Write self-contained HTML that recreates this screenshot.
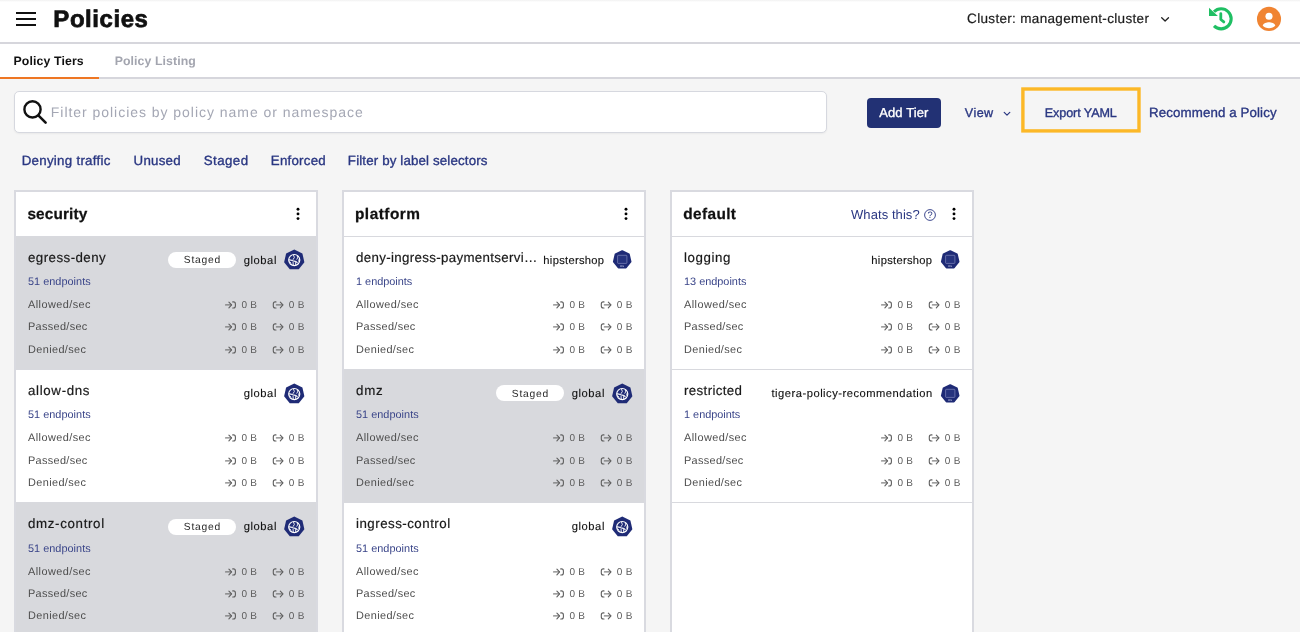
<!DOCTYPE html>
<html lang="en"><head><meta charset="utf-8"><title>Policies</title><style>
*{box-sizing:border-box;margin:0;padding:0}
html,body{width:1300px;height:632px;overflow:hidden}
body{background:#f5f5f5;font-family:"Liberation Sans",sans-serif;position:relative;text-rendering:geometricPrecision}
.t{position:absolute;white-space:nowrap;line-height:20px;height:20px;will-change:transform}
.topbar{position:absolute;left:0;top:0;width:1300px;height:44px;background:#fff;border-bottom:2px solid #d6d6dc;background:linear-gradient(#f1f1f1,#fff 2px) #fff}
.burger{position:absolute;left:16px;top:12px;width:20px;height:14px;border-top:2px solid #111;border-bottom:2px solid #111}
.burger:after{content:"";position:absolute;left:0;top:4px;width:20px;height:2px;background:#111}
.tabs{position:absolute;left:0;top:44px;width:1300px;height:35px;background:#fff;border-bottom:2px solid #d6d6dc}
.tabs .on{position:absolute;left:0;top:33px;width:99px;height:2px;background:#ee7623}
.search{position:absolute;left:14px;top:91px;width:813px;height:42px;background:#fff;border:1px solid #d6d8df;border-radius:5px;box-shadow:0 1px 2px rgba(0,0,0,.05)}
.btn{position:absolute;left:867px;top:98px;width:74px;height:30px;background:#223174;border-radius:4px}
.hl{position:absolute;left:1020px;top:86px;width:124px;height:50px;overflow:visible}
.tier{position:absolute;top:190px;width:304px;height:460px;background:#fff;border:2px solid #d9dae0}
.th{position:relative;height:45px;border-bottom:1px solid #d8d9de}
.card{position:relative;height:133px;border-bottom:1px solid #d8d9de;background:#fff}
.card.staged{background:#d8d9dd}
.pill{position:absolute;width:68px;height:16px;border-radius:8px;background:#fff}
.ico,.ar,.kebab,.q,.abs{position:absolute;overflow:visible;will-change:transform}
</style></head>
<body>
<header class="topbar"><div class="burger"></div><span class="t" id="title" style="left:53px;top:10px;font-size:24px;color:#111;letter-spacing:0.544px;padding-left:0.35px;font-weight:700;-webkit-text-stroke:0.7px #111;">Policies</span><span class="t" id="cluster" style="left:967px;top:9px;font-size:13.5px;color:#1c1c1c;letter-spacing:0.326px;padding-left:0.08px;-webkit-text-stroke:0.2px #1c1c1c;">Cluster: management-cluster</span>
<svg class="abs" style="left:1160px;top:15.5px" width="10" height="7" viewBox="0 0 10 7"><path d="M1.7 1.7L5.1 5.0L8.5 1.7" fill="none" stroke="#222" stroke-width="1.3" stroke-linecap="round" stroke-linejoin="round"/></svg>
<svg class="abs" style="left:1207px;top:5px" width="28" height="28" viewBox="0 0 28 28"><path d="M7 6.75A10.05 10.05 0 1 1 7 20.95" fill="none" stroke="#1fbf63" stroke-width="3.1"/><path d="M2 2.8L2 11L10.9 11Z" fill="#1fbf63"/><path d="M13.8 8.6V14.5L16.8 16.9" fill="none" stroke="#1fbf63" stroke-width="2.8" stroke-linecap="round" stroke-linejoin="round"/></svg>
<svg class="abs" style="left:1255px;top:5px" width="28" height="28" viewBox="0 0 28 28"><circle cx="14" cy="13.9" r="12.05" fill="#f08432"/><circle cx="14" cy="11.3" r="3.55" fill="#fff"/><path fill="#fff" d="M7.7 20.4C8.3 18.3 11.6 17.2 14 17.2S19.7 18.3 20.3 20.4C18.9 22.2 16.6 23.2 14 23.2S9.100 22.2 7.7 20.4Z"/></svg>
</header>
<nav class="tabs"><span class="t" id="tab1" style="left:13px;top:7px;font-size:12.3px;color:#111;letter-spacing:0.121px;padding-left:0.55px;font-weight:700;">Policy Tiers</span><span class="t" id="tab2" style="left:114px;top:7px;font-size:12.3px;color:#a3a5af;letter-spacing:0.089px;padding-left:0.72px;font-weight:700;">Policy Listing</span><div class="on"></div></nav>
<div class="search"><svg class="abs" style="left:6px;top:6px" width="28" height="28" viewBox="0 0 28 28"><circle cx="11.5" cy="11.4" r="8.1" fill="none" stroke="#111" stroke-width="2.4"/><path d="M17.6 17.6L24.6 24.6" stroke="#111" stroke-width="2.6" stroke-linecap="round"/></svg><span class="t" id="ph" style="left:35px;top:10px;font-size:14px;color:#a4a7b4;letter-spacing:0.962px;padding-left:0.82px;">Filter policies by policy name or namespace</span></div>
<div class="btn"></div><span class="t" id="addtier" style="left:879px;top:103px;font-size:13px;color:#fff;letter-spacing:0.129px;padding-left:0.13px;-webkit-text-stroke:0.35px #fff;">Add Tier</span><span class="t" id="view" style="left:964px;top:103px;font-size:12.6px;color:#2a3782;letter-spacing:0.434px;padding-left:0.83px;-webkit-text-stroke:0.35px #2a3782;">View</span>
<svg class="abs" style="left:1003px;top:110.5px" width="8" height="6" viewBox="0 0 8 6"><path d="M1.2 1.3L4 4.1L6.8 1.3" fill="none" stroke="#2a3782" stroke-width="1.2" stroke-linecap="round" stroke-linejoin="round"/></svg>
<svg class="hl" viewBox="0 0 124 50"><rect x="2.9" y="3" width="116.1" height="41.9" fill="none" stroke="#fcb827" stroke-width="3.4"/></svg><span class="t" id="export" style="left:1044px;top:103px;font-size:12.6px;color:#2a3782;letter-spacing:-0.092px;padding-left:0.75px;-webkit-text-stroke:0.35px #2a3782;">Export YAML</span><span class="t" id="recommend" style="left:1149px;top:103px;font-size:13.3px;color:#2a3782;letter-spacing:0.111px;padding-left:0.09px;-webkit-text-stroke:0.35px #2a3782;">Recommend a Policy</span>
<div class="filters"><span class="t" id="f1" style="left:21px;top:151px;font-size:13.3px;color:#2a3782;letter-spacing:0.285px;padding-left:0.68px;-webkit-text-stroke:0.35px #2a3782;">Denying traffic</span><span class="t" id="f2" style="left:133px;top:151px;font-size:13.3px;color:#2a3782;letter-spacing:0.240px;padding-left:0.62px;-webkit-text-stroke:0.35px #2a3782;">Unused</span><span class="t" id="f3" style="left:203px;top:151px;font-size:13.3px;color:#2a3782;letter-spacing:0.470px;padding-left:0.64px;-webkit-text-stroke:0.35px #2a3782;">Staged</span><span class="t" id="f4" style="left:270px;top:151px;font-size:13.3px;color:#2a3782;letter-spacing:0.227px;padding-left:0.86px;-webkit-text-stroke:0.35px #2a3782;">Enforced</span><span class="t" id="f5" style="left:347px;top:151px;font-size:13.3px;color:#2a3782;letter-spacing:0.150px;padding-left:0.86px;-webkit-text-stroke:0.35px #2a3782;">Filter by label selectors</span></div>
<main>
<section class="tier" style="left:14px">
<header class="th">
<span class="t" id="h0" style="left:11px;top:13px;font-size:15.4px;color:#111;letter-spacing:0.108px;padding-left:0.45px;font-weight:700;-webkit-text-stroke:0.25px #111;">security</span>
<svg class="kebab" style="left:279.9px;top:15px" viewBox="0 0 4 14" width="4" height="14"><circle cx="2" cy="2.2" r="1.45"/><circle cx="2" cy="6.9" r="1.45"/><circle cx="2" cy="11.6" r="1.45"/></svg>
</header>
<article class="card staged">
<span class="t" id="c00n" style="left:12px;top:11px;font-size:13.3px;color:#1a1a1a;letter-spacing:0.455px;-webkit-text-stroke:0.2px #1a1a1a;">egress-deny</span>
<span class="t" id="c00e" style="left:12px;top:35px;font-size:10.9px;color:#3a4589;letter-spacing:0.024px;">51 endpoints</span>
<span class="t" id="c00s" style="left:227px;top:14px;font-size:11.2px;color:#111;letter-spacing:0.582px;padding-left:0.65px;-webkit-text-stroke:0.12px #111;">global</span>
<span class="pill" style="left:152.2px;top:15.0px"></span>
<span class="t" id="c00p" style="left:167px;top:14px;font-size:10.3px;color:#2a2a2a;letter-spacing:0.741px;padding-left:0.82px;">Staged</span>
<svg class="ico" style="left:267.6px;top:12px" viewBox="0 0 21 21" width="21" height="21"><polygon fill="#1f2b76" points="10.25,0.60 18.38,4.52 20.39,13.31 14.76,20.37 5.74,20.37 0.11,13.31 2.12,4.52"/><g transform="translate(10.25,11.05)" fill="none" stroke="#fff" stroke-linecap="round" stroke-linejoin="round"><circle r="5.55" stroke-width="1.15"/><path stroke-width="1.2" stroke-opacity=".92" d="M-5 -0.2C-3 -0.4 -1.8 0.9 0 1.1S2.2 1.6 2.9 2.6"/><path stroke-width="1" stroke-opacity=".88" d="M-0.7 -4.8L0.1 -2.6L-1.1 -0.6M3 -4.2L3.4 -2.2L2.6 -0.8M4.9 -0.9L4.4 1.2M-1.2 2.2L-1 4.6M1.3 2.6L1.5 4.7M-4.6 1.6L-3.4 3"/></g></svg>
<span class="t" id="c00r0" style="left:12px;top:58px;font-size:10.9px;color:#4d4d4d;letter-spacing:0.444px;">Allowed/sec</span>
<svg class="ar" style="left:208.7px;top:63.0px" viewBox="0 0 12 9" width="12" height="9" fill="none" stroke="#5f5f5f" stroke-width="1.1" stroke-linecap="round" stroke-linejoin="round"><path d="M0.6 4.9H6.2" stroke-opacity=".8" stroke-width="1.3"/><path d="M3.9 2.1L6.6 4.9L3.9 7.8"/><path d="M7.7 1.9H8.4Q10.4 1.9 10.4 3.9V6Q10.4 8 8.4 8H7.7"/></svg>
<span class="t" id="c00r0a" style="left:225px;top:59px;font-size:10px;color:#5c5c5c;letter-spacing:0.228px;padding-left:0.58px;">0 B</span>
<svg class="ar" style="left:256.2px;top:63.0px" viewBox="0 0 12 9" width="12" height="9" fill="none" stroke="#5f5f5f" stroke-width="1.1" stroke-linecap="round" stroke-linejoin="round"><path d="M4.4 4.9H10.4" stroke-opacity=".8" stroke-width="1.3"/><path d="M8.3 2.1L11 4.9L8.3 7.8"/><path d="M4 1.9H3.3Q1.3 1.9 1.3 3.9V6Q1.3 8 3.3 8H4"/></svg>
<span class="t" id="c00r0b" style="left:272px;top:59px;font-size:10px;color:#5c5c5c;letter-spacing:0.330px;padding-left:0.85px;">0 B</span>
<span class="t" id="c00r1" style="left:12px;top:80px;font-size:10.9px;color:#4d4d4d;letter-spacing:0.334px;">Passed/sec</span>
<svg class="ar" style="left:208.7px;top:85.0px" viewBox="0 0 12 9" width="12" height="9" fill="none" stroke="#5f5f5f" stroke-width="1.1" stroke-linecap="round" stroke-linejoin="round"><path d="M0.6 4.9H6.2" stroke-opacity=".8" stroke-width="1.3"/><path d="M3.9 2.1L6.6 4.9L3.9 7.8"/><path d="M7.7 1.9H8.4Q10.4 1.9 10.4 3.9V6Q10.4 8 8.4 8H7.7"/></svg>
<span class="t" id="c00r1a" style="left:225px;top:81px;font-size:10px;color:#5c5c5c;letter-spacing:0.228px;padding-left:0.58px;">0 B</span>
<svg class="ar" style="left:256.2px;top:85.0px" viewBox="0 0 12 9" width="12" height="9" fill="none" stroke="#5f5f5f" stroke-width="1.1" stroke-linecap="round" stroke-linejoin="round"><path d="M4.4 4.9H10.4" stroke-opacity=".8" stroke-width="1.3"/><path d="M8.3 2.1L11 4.9L8.3 7.8"/><path d="M4 1.9H3.3Q1.3 1.9 1.3 3.9V6Q1.3 8 3.3 8H4"/></svg>
<span class="t" id="c00r1b" style="left:272px;top:81px;font-size:10px;color:#5c5c5c;letter-spacing:0.330px;padding-left:0.85px;">0 B</span>
<span class="t" id="c00r2" style="left:12px;top:103px;font-size:10.9px;color:#4d4d4d;letter-spacing:0.389px;">Denied/sec</span>
<svg class="ar" style="left:208.7px;top:108.0px" viewBox="0 0 12 9" width="12" height="9" fill="none" stroke="#5f5f5f" stroke-width="1.1" stroke-linecap="round" stroke-linejoin="round"><path d="M0.6 4.9H6.2" stroke-opacity=".8" stroke-width="1.3"/><path d="M3.9 2.1L6.6 4.9L3.9 7.8"/><path d="M7.7 1.9H8.4Q10.4 1.9 10.4 3.9V6Q10.4 8 8.4 8H7.7"/></svg>
<span class="t" id="c00r2a" style="left:225px;top:104px;font-size:10px;color:#5c5c5c;letter-spacing:0.228px;padding-left:0.58px;">0 B</span>
<svg class="ar" style="left:256.2px;top:108.0px" viewBox="0 0 12 9" width="12" height="9" fill="none" stroke="#5f5f5f" stroke-width="1.1" stroke-linecap="round" stroke-linejoin="round"><path d="M4.4 4.9H10.4" stroke-opacity=".8" stroke-width="1.3"/><path d="M8.3 2.1L11 4.9L8.3 7.8"/><path d="M4 1.9H3.3Q1.3 1.9 1.3 3.9V6Q1.3 8 3.3 8H4"/></svg>
<span class="t" id="c00r2b" style="left:272px;top:104px;font-size:10px;color:#5c5c5c;letter-spacing:0.330px;padding-left:0.85px;">0 B</span>
</article>
<article class="card">
<span class="t" id="c01n" style="left:12px;top:11px;font-size:13.3px;color:#1a1a1a;letter-spacing:0.666px;-webkit-text-stroke:0.2px #1a1a1a;">allow-dns</span>
<span class="t" id="c01e" style="left:12px;top:35px;font-size:10.9px;color:#3a4589;letter-spacing:0.024px;">51 endpoints</span>
<span class="t" id="c01s" style="left:227px;top:14px;font-size:11.2px;color:#111;letter-spacing:0.582px;padding-left:0.65px;-webkit-text-stroke:0.12px #111;">global</span>
<svg class="ico" style="left:267.6px;top:13px" viewBox="0 0 21 21" width="21" height="21"><polygon fill="#1f2b76" points="10.25,0.60 18.38,4.52 20.39,13.31 14.76,20.37 5.74,20.37 0.11,13.31 2.12,4.52"/><g transform="translate(10.25,11.05)" fill="none" stroke="#fff" stroke-linecap="round" stroke-linejoin="round"><circle r="5.55" stroke-width="1.15"/><path stroke-width="1.2" stroke-opacity=".92" d="M-5 -0.2C-3 -0.4 -1.8 0.9 0 1.1S2.2 1.6 2.9 2.6"/><path stroke-width="1" stroke-opacity=".88" d="M-0.7 -4.8L0.1 -2.6L-1.1 -0.6M3 -4.2L3.4 -2.2L2.6 -0.8M4.9 -0.9L4.4 1.2M-1.2 2.2L-1 4.6M1.3 2.6L1.5 4.7M-4.6 1.6L-3.4 3"/></g></svg>
<span class="t" id="c01r0" style="left:12px;top:58px;font-size:10.9px;color:#4d4d4d;letter-spacing:0.444px;">Allowed/sec</span>
<svg class="ar" style="left:208.7px;top:63.0px" viewBox="0 0 12 9" width="12" height="9" fill="none" stroke="#5f5f5f" stroke-width="1.1" stroke-linecap="round" stroke-linejoin="round"><path d="M0.6 4.9H6.2" stroke-opacity=".8" stroke-width="1.3"/><path d="M3.9 2.1L6.6 4.9L3.9 7.8"/><path d="M7.7 1.9H8.4Q10.4 1.9 10.4 3.9V6Q10.4 8 8.4 8H7.7"/></svg>
<span class="t" id="c01r0a" style="left:225px;top:59px;font-size:10px;color:#5c5c5c;letter-spacing:0.228px;padding-left:0.58px;">0 B</span>
<svg class="ar" style="left:256.2px;top:63.0px" viewBox="0 0 12 9" width="12" height="9" fill="none" stroke="#5f5f5f" stroke-width="1.1" stroke-linecap="round" stroke-linejoin="round"><path d="M4.4 4.9H10.4" stroke-opacity=".8" stroke-width="1.3"/><path d="M8.3 2.1L11 4.9L8.3 7.8"/><path d="M4 1.9H3.3Q1.3 1.9 1.3 3.9V6Q1.3 8 3.3 8H4"/></svg>
<span class="t" id="c01r0b" style="left:272px;top:59px;font-size:10px;color:#5c5c5c;letter-spacing:0.330px;padding-left:0.85px;">0 B</span>
<span class="t" id="c01r1" style="left:12px;top:81px;font-size:10.9px;color:#4d4d4d;letter-spacing:0.334px;">Passed/sec</span>
<svg class="ar" style="left:208.7px;top:86.0px" viewBox="0 0 12 9" width="12" height="9" fill="none" stroke="#5f5f5f" stroke-width="1.1" stroke-linecap="round" stroke-linejoin="round"><path d="M0.6 4.9H6.2" stroke-opacity=".8" stroke-width="1.3"/><path d="M3.9 2.1L6.6 4.9L3.9 7.8"/><path d="M7.7 1.9H8.4Q10.4 1.9 10.4 3.9V6Q10.4 8 8.4 8H7.7"/></svg>
<span class="t" id="c01r1a" style="left:225px;top:82px;font-size:10px;color:#5c5c5c;letter-spacing:0.228px;padding-left:0.58px;">0 B</span>
<svg class="ar" style="left:256.2px;top:86.0px" viewBox="0 0 12 9" width="12" height="9" fill="none" stroke="#5f5f5f" stroke-width="1.1" stroke-linecap="round" stroke-linejoin="round"><path d="M4.4 4.9H10.4" stroke-opacity=".8" stroke-width="1.3"/><path d="M8.3 2.1L11 4.9L8.3 7.8"/><path d="M4 1.9H3.3Q1.3 1.9 1.3 3.9V6Q1.3 8 3.3 8H4"/></svg>
<span class="t" id="c01r1b" style="left:272px;top:82px;font-size:10px;color:#5c5c5c;letter-spacing:0.330px;padding-left:0.85px;">0 B</span>
<span class="t" id="c01r2" style="left:12px;top:103px;font-size:10.9px;color:#4d4d4d;letter-spacing:0.389px;">Denied/sec</span>
<svg class="ar" style="left:208.7px;top:108.0px" viewBox="0 0 12 9" width="12" height="9" fill="none" stroke="#5f5f5f" stroke-width="1.1" stroke-linecap="round" stroke-linejoin="round"><path d="M0.6 4.9H6.2" stroke-opacity=".8" stroke-width="1.3"/><path d="M3.9 2.1L6.6 4.9L3.9 7.8"/><path d="M7.7 1.9H8.4Q10.4 1.9 10.4 3.9V6Q10.4 8 8.4 8H7.7"/></svg>
<span class="t" id="c01r2a" style="left:225px;top:104px;font-size:10px;color:#5c5c5c;letter-spacing:0.228px;padding-left:0.58px;">0 B</span>
<svg class="ar" style="left:256.2px;top:108.0px" viewBox="0 0 12 9" width="12" height="9" fill="none" stroke="#5f5f5f" stroke-width="1.1" stroke-linecap="round" stroke-linejoin="round"><path d="M4.4 4.9H10.4" stroke-opacity=".8" stroke-width="1.3"/><path d="M8.3 2.1L11 4.9L8.3 7.8"/><path d="M4 1.9H3.3Q1.3 1.9 1.3 3.9V6Q1.3 8 3.3 8H4"/></svg>
<span class="t" id="c01r2b" style="left:272px;top:104px;font-size:10px;color:#5c5c5c;letter-spacing:0.330px;padding-left:0.85px;">0 B</span>
</article>
<article class="card staged">
<span class="t" id="c02n" style="left:12px;top:11px;font-size:13.3px;color:#1a1a1a;letter-spacing:0.663px;-webkit-text-stroke:0.2px #1a1a1a;">dmz-control</span>
<span class="t" id="c02e" style="left:12px;top:36px;font-size:10.9px;color:#3a4589;letter-spacing:0.024px;">51 endpoints</span>
<span class="t" id="c02s" style="left:227px;top:14px;font-size:11.2px;color:#111;letter-spacing:0.582px;padding-left:0.65px;-webkit-text-stroke:0.12px #111;">global</span>
<span class="pill" style="left:152.2px;top:15.5px"></span>
<span class="t" id="c02p" style="left:167px;top:15px;font-size:10.3px;color:#2a2a2a;letter-spacing:0.741px;padding-left:0.82px;">Staged</span>
<svg class="ico" style="left:267.6px;top:13px" viewBox="0 0 21 21" width="21" height="21"><polygon fill="#1f2b76" points="10.25,0.60 18.38,4.52 20.39,13.31 14.76,20.37 5.74,20.37 0.11,13.31 2.12,4.52"/><g transform="translate(10.25,11.05)" fill="none" stroke="#fff" stroke-linecap="round" stroke-linejoin="round"><circle r="5.55" stroke-width="1.15"/><path stroke-width="1.2" stroke-opacity=".92" d="M-5 -0.2C-3 -0.4 -1.8 0.9 0 1.1S2.2 1.6 2.9 2.6"/><path stroke-width="1" stroke-opacity=".88" d="M-0.7 -4.8L0.1 -2.6L-1.1 -0.6M3 -4.2L3.4 -2.2L2.6 -0.8M4.9 -0.9L4.4 1.2M-1.2 2.2L-1 4.6M1.3 2.6L1.5 4.7M-4.6 1.6L-3.4 3"/></g></svg>
<span class="t" id="c02r0" style="left:12px;top:59px;font-size:10.9px;color:#4d4d4d;letter-spacing:0.444px;">Allowed/sec</span>
<svg class="ar" style="left:208.7px;top:64.0px" viewBox="0 0 12 9" width="12" height="9" fill="none" stroke="#5f5f5f" stroke-width="1.1" stroke-linecap="round" stroke-linejoin="round"><path d="M0.6 4.9H6.2" stroke-opacity=".8" stroke-width="1.3"/><path d="M3.9 2.1L6.6 4.9L3.9 7.8"/><path d="M7.7 1.9H8.4Q10.4 1.9 10.4 3.9V6Q10.4 8 8.4 8H7.7"/></svg>
<span class="t" id="c02r0a" style="left:225px;top:60px;font-size:10px;color:#5c5c5c;letter-spacing:0.228px;padding-left:0.58px;">0 B</span>
<svg class="ar" style="left:256.2px;top:64.0px" viewBox="0 0 12 9" width="12" height="9" fill="none" stroke="#5f5f5f" stroke-width="1.1" stroke-linecap="round" stroke-linejoin="round"><path d="M4.4 4.9H10.4" stroke-opacity=".8" stroke-width="1.3"/><path d="M8.3 2.1L11 4.9L8.3 7.8"/><path d="M4 1.9H3.3Q1.3 1.9 1.3 3.9V6Q1.3 8 3.3 8H4"/></svg>
<span class="t" id="c02r0b" style="left:272px;top:60px;font-size:10px;color:#5c5c5c;letter-spacing:0.330px;padding-left:0.85px;">0 B</span>
<span class="t" id="c02r1" style="left:12px;top:81px;font-size:10.9px;color:#4d4d4d;letter-spacing:0.334px;">Passed/sec</span>
<svg class="ar" style="left:208.7px;top:86.0px" viewBox="0 0 12 9" width="12" height="9" fill="none" stroke="#5f5f5f" stroke-width="1.1" stroke-linecap="round" stroke-linejoin="round"><path d="M0.6 4.9H6.2" stroke-opacity=".8" stroke-width="1.3"/><path d="M3.9 2.1L6.6 4.9L3.9 7.8"/><path d="M7.7 1.9H8.4Q10.4 1.9 10.4 3.9V6Q10.4 8 8.4 8H7.7"/></svg>
<span class="t" id="c02r1a" style="left:225px;top:82px;font-size:10px;color:#5c5c5c;letter-spacing:0.228px;padding-left:0.58px;">0 B</span>
<svg class="ar" style="left:256.2px;top:86.0px" viewBox="0 0 12 9" width="12" height="9" fill="none" stroke="#5f5f5f" stroke-width="1.1" stroke-linecap="round" stroke-linejoin="round"><path d="M4.4 4.9H10.4" stroke-opacity=".8" stroke-width="1.3"/><path d="M8.3 2.1L11 4.9L8.3 7.8"/><path d="M4 1.9H3.3Q1.3 1.9 1.3 3.9V6Q1.3 8 3.3 8H4"/></svg>
<span class="t" id="c02r1b" style="left:272px;top:82px;font-size:10px;color:#5c5c5c;letter-spacing:0.330px;padding-left:0.85px;">0 B</span>
<span class="t" id="c02r2" style="left:12px;top:103px;font-size:10.9px;color:#4d4d4d;letter-spacing:0.389px;">Denied/sec</span>
<svg class="ar" style="left:208.7px;top:108.0px" viewBox="0 0 12 9" width="12" height="9" fill="none" stroke="#5f5f5f" stroke-width="1.1" stroke-linecap="round" stroke-linejoin="round"><path d="M0.6 4.9H6.2" stroke-opacity=".8" stroke-width="1.3"/><path d="M3.9 2.1L6.6 4.9L3.9 7.8"/><path d="M7.7 1.9H8.4Q10.4 1.9 10.4 3.9V6Q10.4 8 8.4 8H7.7"/></svg>
<span class="t" id="c02r2a" style="left:225px;top:104px;font-size:10px;color:#5c5c5c;letter-spacing:0.228px;padding-left:0.58px;">0 B</span>
<svg class="ar" style="left:256.2px;top:108.0px" viewBox="0 0 12 9" width="12" height="9" fill="none" stroke="#5f5f5f" stroke-width="1.1" stroke-linecap="round" stroke-linejoin="round"><path d="M4.4 4.9H10.4" stroke-opacity=".8" stroke-width="1.3"/><path d="M8.3 2.1L11 4.9L8.3 7.8"/><path d="M4 1.9H3.3Q1.3 1.9 1.3 3.9V6Q1.3 8 3.3 8H4"/></svg>
<span class="t" id="c02r2b" style="left:272px;top:104px;font-size:10px;color:#5c5c5c;letter-spacing:0.330px;padding-left:0.85px;">0 B</span>
</article>
</section>
<section class="tier" style="left:342px">
<header class="th">
<span class="t" id="h1" style="left:10px;top:13px;font-size:15.4px;color:#111;letter-spacing:0.496px;padding-left:0.97px;font-weight:700;-webkit-text-stroke:0.25px #111;">platform</span>
<svg class="kebab" style="left:279.9px;top:15px" viewBox="0 0 4 14" width="4" height="14"><circle cx="2" cy="2.2" r="1.45"/><circle cx="2" cy="6.9" r="1.45"/><circle cx="2" cy="11.6" r="1.45"/></svg>
</header>
<article class="card">
<span class="t" id="c10n" style="left:12px;top:11px;font-size:13.3px;color:#1a1a1a;letter-spacing:0.338px;-webkit-text-stroke:0.2px #1a1a1a;">deny-ingress-paymentservi…</span>
<span class="t" id="c10e" style="left:12px;top:35px;font-size:10.9px;color:#3a4589;letter-spacing:-0.000px;">1 endpoints</span>
<span class="t" id="c10s" style="left:199px;top:14px;font-size:11.2px;color:#111;letter-spacing:0.282px;padding-left:0.36px;-webkit-text-stroke:0.12px #111;">hipstershop</span>
<svg class="ico" style="left:267.6px;top:12px" viewBox="0 0 21 21" width="21" height="21"><polygon fill="#1f2b76" stroke="#1f2b76" stroke-width="1.8" stroke-linejoin="round" points="10.20,2.15 16.92,5.39 18.58,12.66 13.93,18.50 6.47,18.50 1.82,12.66 3.48,5.39"/><rect x="5.6" y="6.3" width="9.3" height="8.1" rx="0.7" fill="#26337e" stroke="#9097c6" stroke-width="0.6"/><text x="10.2" y="17.7" font-size="3.2" font-weight="700" fill="#b9bedd" text-anchor="middle" font-family="Liberation Sans, sans-serif">ns</text></svg>
<span class="t" id="c10r0" style="left:12px;top:58px;font-size:10.9px;color:#4d4d4d;letter-spacing:0.444px;">Allowed/sec</span>
<svg class="ar" style="left:208.7px;top:63.0px" viewBox="0 0 12 9" width="12" height="9" fill="none" stroke="#5f5f5f" stroke-width="1.1" stroke-linecap="round" stroke-linejoin="round"><path d="M0.6 4.9H6.2" stroke-opacity=".8" stroke-width="1.3"/><path d="M3.9 2.1L6.6 4.9L3.9 7.8"/><path d="M7.7 1.9H8.4Q10.4 1.9 10.4 3.9V6Q10.4 8 8.4 8H7.7"/></svg>
<span class="t" id="c10r0a" style="left:225px;top:59px;font-size:10px;color:#5c5c5c;letter-spacing:0.228px;padding-left:0.58px;">0 B</span>
<svg class="ar" style="left:256.2px;top:63.0px" viewBox="0 0 12 9" width="12" height="9" fill="none" stroke="#5f5f5f" stroke-width="1.1" stroke-linecap="round" stroke-linejoin="round"><path d="M4.4 4.9H10.4" stroke-opacity=".8" stroke-width="1.3"/><path d="M8.3 2.1L11 4.9L8.3 7.8"/><path d="M4 1.9H3.3Q1.3 1.9 1.3 3.9V6Q1.3 8 3.3 8H4"/></svg>
<span class="t" id="c10r0b" style="left:272px;top:59px;font-size:10px;color:#5c5c5c;letter-spacing:0.330px;padding-left:0.85px;">0 B</span>
<span class="t" id="c10r1" style="left:12px;top:80px;font-size:10.9px;color:#4d4d4d;letter-spacing:0.334px;">Passed/sec</span>
<svg class="ar" style="left:208.7px;top:85.0px" viewBox="0 0 12 9" width="12" height="9" fill="none" stroke="#5f5f5f" stroke-width="1.1" stroke-linecap="round" stroke-linejoin="round"><path d="M0.6 4.9H6.2" stroke-opacity=".8" stroke-width="1.3"/><path d="M3.9 2.1L6.6 4.9L3.9 7.8"/><path d="M7.7 1.9H8.4Q10.4 1.9 10.4 3.9V6Q10.4 8 8.4 8H7.7"/></svg>
<span class="t" id="c10r1a" style="left:225px;top:81px;font-size:10px;color:#5c5c5c;letter-spacing:0.228px;padding-left:0.58px;">0 B</span>
<svg class="ar" style="left:256.2px;top:85.0px" viewBox="0 0 12 9" width="12" height="9" fill="none" stroke="#5f5f5f" stroke-width="1.1" stroke-linecap="round" stroke-linejoin="round"><path d="M4.4 4.9H10.4" stroke-opacity=".8" stroke-width="1.3"/><path d="M8.3 2.1L11 4.9L8.3 7.8"/><path d="M4 1.9H3.3Q1.3 1.9 1.3 3.9V6Q1.3 8 3.3 8H4"/></svg>
<span class="t" id="c10r1b" style="left:272px;top:81px;font-size:10px;color:#5c5c5c;letter-spacing:0.330px;padding-left:0.85px;">0 B</span>
<span class="t" id="c10r2" style="left:12px;top:103px;font-size:10.9px;color:#4d4d4d;letter-spacing:0.389px;">Denied/sec</span>
<svg class="ar" style="left:208.7px;top:108.0px" viewBox="0 0 12 9" width="12" height="9" fill="none" stroke="#5f5f5f" stroke-width="1.1" stroke-linecap="round" stroke-linejoin="round"><path d="M0.6 4.9H6.2" stroke-opacity=".8" stroke-width="1.3"/><path d="M3.9 2.1L6.6 4.9L3.9 7.8"/><path d="M7.7 1.9H8.4Q10.4 1.9 10.4 3.9V6Q10.4 8 8.4 8H7.7"/></svg>
<span class="t" id="c10r2a" style="left:225px;top:104px;font-size:10px;color:#5c5c5c;letter-spacing:0.228px;padding-left:0.58px;">0 B</span>
<svg class="ar" style="left:256.2px;top:108.0px" viewBox="0 0 12 9" width="12" height="9" fill="none" stroke="#5f5f5f" stroke-width="1.1" stroke-linecap="round" stroke-linejoin="round"><path d="M4.4 4.9H10.4" stroke-opacity=".8" stroke-width="1.3"/><path d="M8.3 2.1L11 4.9L8.3 7.8"/><path d="M4 1.9H3.3Q1.3 1.9 1.3 3.9V6Q1.3 8 3.3 8H4"/></svg>
<span class="t" id="c10r2b" style="left:272px;top:104px;font-size:10px;color:#5c5c5c;letter-spacing:0.330px;padding-left:0.85px;">0 B</span>
</article>
<article class="card staged">
<span class="t" id="c11n" style="left:12px;top:11px;font-size:13.3px;color:#1a1a1a;letter-spacing:0.772px;-webkit-text-stroke:0.2px #1a1a1a;">dmz</span>
<span class="t" id="c11e" style="left:12px;top:35px;font-size:10.9px;color:#3a4589;letter-spacing:0.024px;">51 endpoints</span>
<span class="t" id="c11s" style="left:227px;top:14px;font-size:11.2px;color:#111;letter-spacing:0.582px;padding-left:0.65px;-webkit-text-stroke:0.12px #111;">global</span>
<span class="pill" style="left:152.2px;top:15.2px"></span>
<span class="t" id="c11p" style="left:167px;top:15px;font-size:10.3px;color:#2a2a2a;letter-spacing:0.741px;padding-left:0.82px;">Staged</span>
<svg class="ico" style="left:267.6px;top:13px" viewBox="0 0 21 21" width="21" height="21"><polygon fill="#1f2b76" points="10.25,0.60 18.38,4.52 20.39,13.31 14.76,20.37 5.74,20.37 0.11,13.31 2.12,4.52"/><g transform="translate(10.25,11.05)" fill="none" stroke="#fff" stroke-linecap="round" stroke-linejoin="round"><circle r="5.55" stroke-width="1.15"/><path stroke-width="1.2" stroke-opacity=".92" d="M-5 -0.2C-3 -0.4 -1.8 0.9 0 1.1S2.2 1.6 2.9 2.6"/><path stroke-width="1" stroke-opacity=".88" d="M-0.7 -4.8L0.1 -2.6L-1.1 -0.6M3 -4.2L3.4 -2.2L2.6 -0.8M4.9 -0.9L4.4 1.2M-1.2 2.2L-1 4.6M1.3 2.6L1.5 4.7M-4.6 1.6L-3.4 3"/></g></svg>
<span class="t" id="c11r0" style="left:12px;top:58px;font-size:10.9px;color:#4d4d4d;letter-spacing:0.444px;">Allowed/sec</span>
<svg class="ar" style="left:208.7px;top:63.0px" viewBox="0 0 12 9" width="12" height="9" fill="none" stroke="#5f5f5f" stroke-width="1.1" stroke-linecap="round" stroke-linejoin="round"><path d="M0.6 4.9H6.2" stroke-opacity=".8" stroke-width="1.3"/><path d="M3.9 2.1L6.6 4.9L3.9 7.8"/><path d="M7.7 1.9H8.4Q10.4 1.9 10.4 3.9V6Q10.4 8 8.4 8H7.7"/></svg>
<span class="t" id="c11r0a" style="left:225px;top:59px;font-size:10px;color:#5c5c5c;letter-spacing:0.228px;padding-left:0.58px;">0 B</span>
<svg class="ar" style="left:256.2px;top:63.0px" viewBox="0 0 12 9" width="12" height="9" fill="none" stroke="#5f5f5f" stroke-width="1.1" stroke-linecap="round" stroke-linejoin="round"><path d="M4.4 4.9H10.4" stroke-opacity=".8" stroke-width="1.3"/><path d="M8.3 2.1L11 4.9L8.3 7.8"/><path d="M4 1.9H3.3Q1.3 1.9 1.3 3.9V6Q1.3 8 3.3 8H4"/></svg>
<span class="t" id="c11r0b" style="left:272px;top:59px;font-size:10px;color:#5c5c5c;letter-spacing:0.330px;padding-left:0.85px;">0 B</span>
<span class="t" id="c11r1" style="left:12px;top:81px;font-size:10.9px;color:#4d4d4d;letter-spacing:0.334px;">Passed/sec</span>
<svg class="ar" style="left:208.7px;top:86.0px" viewBox="0 0 12 9" width="12" height="9" fill="none" stroke="#5f5f5f" stroke-width="1.1" stroke-linecap="round" stroke-linejoin="round"><path d="M0.6 4.9H6.2" stroke-opacity=".8" stroke-width="1.3"/><path d="M3.9 2.1L6.6 4.9L3.9 7.8"/><path d="M7.7 1.9H8.4Q10.4 1.9 10.4 3.9V6Q10.4 8 8.4 8H7.7"/></svg>
<span class="t" id="c11r1a" style="left:225px;top:82px;font-size:10px;color:#5c5c5c;letter-spacing:0.228px;padding-left:0.58px;">0 B</span>
<svg class="ar" style="left:256.2px;top:86.0px" viewBox="0 0 12 9" width="12" height="9" fill="none" stroke="#5f5f5f" stroke-width="1.1" stroke-linecap="round" stroke-linejoin="round"><path d="M4.4 4.9H10.4" stroke-opacity=".8" stroke-width="1.3"/><path d="M8.3 2.1L11 4.9L8.3 7.8"/><path d="M4 1.9H3.3Q1.3 1.9 1.3 3.9V6Q1.3 8 3.3 8H4"/></svg>
<span class="t" id="c11r1b" style="left:272px;top:82px;font-size:10px;color:#5c5c5c;letter-spacing:0.330px;padding-left:0.85px;">0 B</span>
<span class="t" id="c11r2" style="left:12px;top:103px;font-size:10.9px;color:#4d4d4d;letter-spacing:0.389px;">Denied/sec</span>
<svg class="ar" style="left:208.7px;top:108.0px" viewBox="0 0 12 9" width="12" height="9" fill="none" stroke="#5f5f5f" stroke-width="1.1" stroke-linecap="round" stroke-linejoin="round"><path d="M0.6 4.9H6.2" stroke-opacity=".8" stroke-width="1.3"/><path d="M3.9 2.1L6.6 4.9L3.9 7.8"/><path d="M7.7 1.9H8.4Q10.4 1.9 10.4 3.9V6Q10.4 8 8.4 8H7.7"/></svg>
<span class="t" id="c11r2a" style="left:225px;top:104px;font-size:10px;color:#5c5c5c;letter-spacing:0.228px;padding-left:0.58px;">0 B</span>
<svg class="ar" style="left:256.2px;top:108.0px" viewBox="0 0 12 9" width="12" height="9" fill="none" stroke="#5f5f5f" stroke-width="1.1" stroke-linecap="round" stroke-linejoin="round"><path d="M4.4 4.9H10.4" stroke-opacity=".8" stroke-width="1.3"/><path d="M8.3 2.1L11 4.9L8.3 7.8"/><path d="M4 1.9H3.3Q1.3 1.9 1.3 3.9V6Q1.3 8 3.3 8H4"/></svg>
<span class="t" id="c11r2b" style="left:272px;top:104px;font-size:10px;color:#5c5c5c;letter-spacing:0.330px;padding-left:0.85px;">0 B</span>
</article>
<article class="card">
<span class="t" id="c12n" style="left:12px;top:11px;font-size:13.3px;color:#1a1a1a;letter-spacing:0.492px;-webkit-text-stroke:0.2px #1a1a1a;">ingress-control</span>
<span class="t" id="c12e" style="left:12px;top:36px;font-size:10.9px;color:#3a4589;letter-spacing:0.024px;">51 endpoints</span>
<span class="t" id="c12s" style="left:227px;top:14px;font-size:11.2px;color:#111;letter-spacing:0.582px;padding-left:0.65px;-webkit-text-stroke:0.12px #111;">global</span>
<svg class="ico" style="left:267.6px;top:13px" viewBox="0 0 21 21" width="21" height="21"><polygon fill="#1f2b76" points="10.25,0.60 18.38,4.52 20.39,13.31 14.76,20.37 5.74,20.37 0.11,13.31 2.12,4.52"/><g transform="translate(10.25,11.05)" fill="none" stroke="#fff" stroke-linecap="round" stroke-linejoin="round"><circle r="5.55" stroke-width="1.15"/><path stroke-width="1.2" stroke-opacity=".92" d="M-5 -0.2C-3 -0.4 -1.8 0.9 0 1.1S2.2 1.6 2.9 2.6"/><path stroke-width="1" stroke-opacity=".88" d="M-0.7 -4.8L0.1 -2.6L-1.1 -0.6M3 -4.2L3.4 -2.2L2.6 -0.8M4.9 -0.9L4.4 1.2M-1.2 2.2L-1 4.6M1.3 2.6L1.5 4.7M-4.6 1.6L-3.4 3"/></g></svg>
<span class="t" id="c12r0" style="left:12px;top:59px;font-size:10.9px;color:#4d4d4d;letter-spacing:0.444px;">Allowed/sec</span>
<svg class="ar" style="left:208.7px;top:64.0px" viewBox="0 0 12 9" width="12" height="9" fill="none" stroke="#5f5f5f" stroke-width="1.1" stroke-linecap="round" stroke-linejoin="round"><path d="M0.6 4.9H6.2" stroke-opacity=".8" stroke-width="1.3"/><path d="M3.9 2.1L6.6 4.9L3.9 7.8"/><path d="M7.7 1.9H8.4Q10.4 1.9 10.4 3.9V6Q10.4 8 8.4 8H7.7"/></svg>
<span class="t" id="c12r0a" style="left:225px;top:60px;font-size:10px;color:#5c5c5c;letter-spacing:0.228px;padding-left:0.58px;">0 B</span>
<svg class="ar" style="left:256.2px;top:64.0px" viewBox="0 0 12 9" width="12" height="9" fill="none" stroke="#5f5f5f" stroke-width="1.1" stroke-linecap="round" stroke-linejoin="round"><path d="M4.4 4.9H10.4" stroke-opacity=".8" stroke-width="1.3"/><path d="M8.3 2.1L11 4.9L8.3 7.8"/><path d="M4 1.9H3.3Q1.3 1.9 1.3 3.9V6Q1.3 8 3.3 8H4"/></svg>
<span class="t" id="c12r0b" style="left:272px;top:60px;font-size:10px;color:#5c5c5c;letter-spacing:0.330px;padding-left:0.85px;">0 B</span>
<span class="t" id="c12r1" style="left:12px;top:81px;font-size:10.9px;color:#4d4d4d;letter-spacing:0.334px;">Passed/sec</span>
<svg class="ar" style="left:208.7px;top:86.0px" viewBox="0 0 12 9" width="12" height="9" fill="none" stroke="#5f5f5f" stroke-width="1.1" stroke-linecap="round" stroke-linejoin="round"><path d="M0.6 4.9H6.2" stroke-opacity=".8" stroke-width="1.3"/><path d="M3.9 2.1L6.6 4.9L3.9 7.8"/><path d="M7.7 1.9H8.4Q10.4 1.9 10.4 3.9V6Q10.4 8 8.4 8H7.7"/></svg>
<span class="t" id="c12r1a" style="left:225px;top:82px;font-size:10px;color:#5c5c5c;letter-spacing:0.228px;padding-left:0.58px;">0 B</span>
<svg class="ar" style="left:256.2px;top:86.0px" viewBox="0 0 12 9" width="12" height="9" fill="none" stroke="#5f5f5f" stroke-width="1.1" stroke-linecap="round" stroke-linejoin="round"><path d="M4.4 4.9H10.4" stroke-opacity=".8" stroke-width="1.3"/><path d="M8.3 2.1L11 4.9L8.3 7.8"/><path d="M4 1.9H3.3Q1.3 1.9 1.3 3.9V6Q1.3 8 3.3 8H4"/></svg>
<span class="t" id="c12r1b" style="left:272px;top:82px;font-size:10px;color:#5c5c5c;letter-spacing:0.330px;padding-left:0.85px;">0 B</span>
<span class="t" id="c12r2" style="left:12px;top:103px;font-size:10.9px;color:#4d4d4d;letter-spacing:0.389px;">Denied/sec</span>
<svg class="ar" style="left:208.7px;top:108.0px" viewBox="0 0 12 9" width="12" height="9" fill="none" stroke="#5f5f5f" stroke-width="1.1" stroke-linecap="round" stroke-linejoin="round"><path d="M0.6 4.9H6.2" stroke-opacity=".8" stroke-width="1.3"/><path d="M3.9 2.1L6.6 4.9L3.9 7.8"/><path d="M7.7 1.9H8.4Q10.4 1.9 10.4 3.9V6Q10.4 8 8.4 8H7.7"/></svg>
<span class="t" id="c12r2a" style="left:225px;top:104px;font-size:10px;color:#5c5c5c;letter-spacing:0.228px;padding-left:0.58px;">0 B</span>
<svg class="ar" style="left:256.2px;top:108.0px" viewBox="0 0 12 9" width="12" height="9" fill="none" stroke="#5f5f5f" stroke-width="1.1" stroke-linecap="round" stroke-linejoin="round"><path d="M4.4 4.9H10.4" stroke-opacity=".8" stroke-width="1.3"/><path d="M8.3 2.1L11 4.9L8.3 7.8"/><path d="M4 1.9H3.3Q1.3 1.9 1.3 3.9V6Q1.3 8 3.3 8H4"/></svg>
<span class="t" id="c12r2b" style="left:272px;top:104px;font-size:10px;color:#5c5c5c;letter-spacing:0.330px;padding-left:0.85px;">0 B</span>
</article>
</section>
<section class="tier" style="left:670px">
<header class="th">
<span class="t" id="h2" style="left:11px;top:13px;font-size:15.4px;color:#111;letter-spacing:0.359px;padding-left:0.31px;font-weight:700;-webkit-text-stroke:0.25px #111;">default</span>
<span class="t" id="w2" style="left:179px;top:13px;font-size:13px;color:#2a3782;letter-spacing:0.072px;padding-left:0.03px;">Whats this?</span>
<svg class="q" style="left:251.89999999999998px;top:16.900000000000006px" viewBox="0 0 12 12" width="12" height="12"><circle cx="6" cy="6" r="5.4" fill="none" stroke="#2a3782" stroke-width="0.9"/><text x="6" y="9.2" font-size="9.2" text-anchor="middle" fill="#2a3782" font-family="Liberation Sans, sans-serif">?</text></svg>
<svg class="kebab" style="left:279.9px;top:15px" viewBox="0 0 4 14" width="4" height="14"><circle cx="2" cy="2.2" r="1.45"/><circle cx="2" cy="6.9" r="1.45"/><circle cx="2" cy="11.6" r="1.45"/></svg>
</header>
<article class="card">
<span class="t" id="c20n" style="left:12px;top:11px;font-size:13.3px;color:#1a1a1a;letter-spacing:0.589px;-webkit-text-stroke:0.2px #1a1a1a;">logging</span>
<span class="t" id="c20e" style="left:12px;top:35px;font-size:10.9px;color:#3a4589;letter-spacing:-0.002px;">13 endpoints</span>
<span class="t" id="c20s" style="left:199px;top:14px;font-size:11.2px;color:#111;letter-spacing:0.282px;padding-left:0.36px;-webkit-text-stroke:0.12px #111;">hipstershop</span>
<svg class="ico" style="left:267.6px;top:12px" viewBox="0 0 21 21" width="21" height="21"><polygon fill="#1f2b76" stroke="#1f2b76" stroke-width="1.8" stroke-linejoin="round" points="10.20,2.15 16.92,5.39 18.58,12.66 13.93,18.50 6.47,18.50 1.82,12.66 3.48,5.39"/><rect x="5.6" y="6.3" width="9.3" height="8.1" rx="0.7" fill="#26337e" stroke="#9097c6" stroke-width="0.6"/><text x="10.2" y="17.7" font-size="3.2" font-weight="700" fill="#b9bedd" text-anchor="middle" font-family="Liberation Sans, sans-serif">ns</text></svg>
<span class="t" id="c20r0" style="left:12px;top:58px;font-size:10.9px;color:#4d4d4d;letter-spacing:0.444px;">Allowed/sec</span>
<svg class="ar" style="left:208.7px;top:63.0px" viewBox="0 0 12 9" width="12" height="9" fill="none" stroke="#5f5f5f" stroke-width="1.1" stroke-linecap="round" stroke-linejoin="round"><path d="M0.6 4.9H6.2" stroke-opacity=".8" stroke-width="1.3"/><path d="M3.9 2.1L6.6 4.9L3.9 7.8"/><path d="M7.7 1.9H8.4Q10.4 1.9 10.4 3.9V6Q10.4 8 8.4 8H7.7"/></svg>
<span class="t" id="c20r0a" style="left:225px;top:59px;font-size:10px;color:#5c5c5c;letter-spacing:0.228px;padding-left:0.58px;">0 B</span>
<svg class="ar" style="left:256.2px;top:63.0px" viewBox="0 0 12 9" width="12" height="9" fill="none" stroke="#5f5f5f" stroke-width="1.1" stroke-linecap="round" stroke-linejoin="round"><path d="M4.4 4.9H10.4" stroke-opacity=".8" stroke-width="1.3"/><path d="M8.3 2.1L11 4.9L8.3 7.8"/><path d="M4 1.9H3.3Q1.3 1.9 1.3 3.9V6Q1.3 8 3.3 8H4"/></svg>
<span class="t" id="c20r0b" style="left:272px;top:59px;font-size:10px;color:#5c5c5c;letter-spacing:0.330px;padding-left:0.85px;">0 B</span>
<span class="t" id="c20r1" style="left:12px;top:80px;font-size:10.9px;color:#4d4d4d;letter-spacing:0.334px;">Passed/sec</span>
<svg class="ar" style="left:208.7px;top:85.0px" viewBox="0 0 12 9" width="12" height="9" fill="none" stroke="#5f5f5f" stroke-width="1.1" stroke-linecap="round" stroke-linejoin="round"><path d="M0.6 4.9H6.2" stroke-opacity=".8" stroke-width="1.3"/><path d="M3.9 2.1L6.6 4.9L3.9 7.8"/><path d="M7.7 1.9H8.4Q10.4 1.9 10.4 3.9V6Q10.4 8 8.4 8H7.7"/></svg>
<span class="t" id="c20r1a" style="left:225px;top:81px;font-size:10px;color:#5c5c5c;letter-spacing:0.228px;padding-left:0.58px;">0 B</span>
<svg class="ar" style="left:256.2px;top:85.0px" viewBox="0 0 12 9" width="12" height="9" fill="none" stroke="#5f5f5f" stroke-width="1.1" stroke-linecap="round" stroke-linejoin="round"><path d="M4.4 4.9H10.4" stroke-opacity=".8" stroke-width="1.3"/><path d="M8.3 2.1L11 4.9L8.3 7.8"/><path d="M4 1.9H3.3Q1.3 1.9 1.3 3.9V6Q1.3 8 3.3 8H4"/></svg>
<span class="t" id="c20r1b" style="left:272px;top:81px;font-size:10px;color:#5c5c5c;letter-spacing:0.330px;padding-left:0.85px;">0 B</span>
<span class="t" id="c20r2" style="left:12px;top:103px;font-size:10.9px;color:#4d4d4d;letter-spacing:0.389px;">Denied/sec</span>
<svg class="ar" style="left:208.7px;top:108.0px" viewBox="0 0 12 9" width="12" height="9" fill="none" stroke="#5f5f5f" stroke-width="1.1" stroke-linecap="round" stroke-linejoin="round"><path d="M0.6 4.9H6.2" stroke-opacity=".8" stroke-width="1.3"/><path d="M3.9 2.1L6.6 4.9L3.9 7.8"/><path d="M7.7 1.9H8.4Q10.4 1.9 10.4 3.9V6Q10.4 8 8.4 8H7.7"/></svg>
<span class="t" id="c20r2a" style="left:225px;top:104px;font-size:10px;color:#5c5c5c;letter-spacing:0.228px;padding-left:0.58px;">0 B</span>
<svg class="ar" style="left:256.2px;top:108.0px" viewBox="0 0 12 9" width="12" height="9" fill="none" stroke="#5f5f5f" stroke-width="1.1" stroke-linecap="round" stroke-linejoin="round"><path d="M4.4 4.9H10.4" stroke-opacity=".8" stroke-width="1.3"/><path d="M8.3 2.1L11 4.9L8.3 7.8"/><path d="M4 1.9H3.3Q1.3 1.9 1.3 3.9V6Q1.3 8 3.3 8H4"/></svg>
<span class="t" id="c20r2b" style="left:272px;top:104px;font-size:10px;color:#5c5c5c;letter-spacing:0.330px;padding-left:0.85px;">0 B</span>
</article>
<article class="card">
<span class="t" id="c21n" style="left:12px;top:11px;font-size:13.3px;color:#1a1a1a;letter-spacing:0.368px;-webkit-text-stroke:0.2px #1a1a1a;">restricted</span>
<span class="t" id="c21e" style="left:12px;top:35px;font-size:10.9px;color:#3a4589;letter-spacing:-0.000px;">1 endpoints</span>
<span class="t" id="c21s" style="left:99px;top:14px;font-size:11.2px;color:#111;letter-spacing:0.495px;padding-left:0.52px;-webkit-text-stroke:0.12px #111;">tigera-policy-recommendation</span>
<svg class="ico" style="left:267.6px;top:13px" viewBox="0 0 21 21" width="21" height="21"><polygon fill="#1f2b76" stroke="#1f2b76" stroke-width="1.8" stroke-linejoin="round" points="10.20,2.15 16.92,5.39 18.58,12.66 13.93,18.50 6.47,18.50 1.82,12.66 3.48,5.39"/><rect x="5.6" y="6.3" width="9.3" height="8.1" rx="0.7" fill="#26337e" stroke="#9097c6" stroke-width="0.6"/><text x="10.2" y="17.7" font-size="3.2" font-weight="700" fill="#b9bedd" text-anchor="middle" font-family="Liberation Sans, sans-serif">ns</text></svg>
<span class="t" id="c21r0" style="left:12px;top:58px;font-size:10.9px;color:#4d4d4d;letter-spacing:0.444px;">Allowed/sec</span>
<svg class="ar" style="left:208.7px;top:63.0px" viewBox="0 0 12 9" width="12" height="9" fill="none" stroke="#5f5f5f" stroke-width="1.1" stroke-linecap="round" stroke-linejoin="round"><path d="M0.6 4.9H6.2" stroke-opacity=".8" stroke-width="1.3"/><path d="M3.9 2.1L6.6 4.9L3.9 7.8"/><path d="M7.7 1.9H8.4Q10.4 1.9 10.4 3.9V6Q10.4 8 8.4 8H7.7"/></svg>
<span class="t" id="c21r0a" style="left:225px;top:59px;font-size:10px;color:#5c5c5c;letter-spacing:0.228px;padding-left:0.58px;">0 B</span>
<svg class="ar" style="left:256.2px;top:63.0px" viewBox="0 0 12 9" width="12" height="9" fill="none" stroke="#5f5f5f" stroke-width="1.1" stroke-linecap="round" stroke-linejoin="round"><path d="M4.4 4.9H10.4" stroke-opacity=".8" stroke-width="1.3"/><path d="M8.3 2.1L11 4.9L8.3 7.8"/><path d="M4 1.9H3.3Q1.3 1.9 1.3 3.9V6Q1.3 8 3.3 8H4"/></svg>
<span class="t" id="c21r0b" style="left:272px;top:59px;font-size:10px;color:#5c5c5c;letter-spacing:0.330px;padding-left:0.85px;">0 B</span>
<span class="t" id="c21r1" style="left:12px;top:81px;font-size:10.9px;color:#4d4d4d;letter-spacing:0.334px;">Passed/sec</span>
<svg class="ar" style="left:208.7px;top:86.0px" viewBox="0 0 12 9" width="12" height="9" fill="none" stroke="#5f5f5f" stroke-width="1.1" stroke-linecap="round" stroke-linejoin="round"><path d="M0.6 4.9H6.2" stroke-opacity=".8" stroke-width="1.3"/><path d="M3.9 2.1L6.6 4.9L3.9 7.8"/><path d="M7.7 1.9H8.4Q10.4 1.9 10.4 3.9V6Q10.4 8 8.4 8H7.7"/></svg>
<span class="t" id="c21r1a" style="left:225px;top:82px;font-size:10px;color:#5c5c5c;letter-spacing:0.228px;padding-left:0.58px;">0 B</span>
<svg class="ar" style="left:256.2px;top:86.0px" viewBox="0 0 12 9" width="12" height="9" fill="none" stroke="#5f5f5f" stroke-width="1.1" stroke-linecap="round" stroke-linejoin="round"><path d="M4.4 4.9H10.4" stroke-opacity=".8" stroke-width="1.3"/><path d="M8.3 2.1L11 4.9L8.3 7.8"/><path d="M4 1.9H3.3Q1.3 1.9 1.3 3.9V6Q1.3 8 3.3 8H4"/></svg>
<span class="t" id="c21r1b" style="left:272px;top:82px;font-size:10px;color:#5c5c5c;letter-spacing:0.330px;padding-left:0.85px;">0 B</span>
<span class="t" id="c21r2" style="left:12px;top:103px;font-size:10.9px;color:#4d4d4d;letter-spacing:0.389px;">Denied/sec</span>
<svg class="ar" style="left:208.7px;top:108.0px" viewBox="0 0 12 9" width="12" height="9" fill="none" stroke="#5f5f5f" stroke-width="1.1" stroke-linecap="round" stroke-linejoin="round"><path d="M0.6 4.9H6.2" stroke-opacity=".8" stroke-width="1.3"/><path d="M3.9 2.1L6.6 4.9L3.9 7.8"/><path d="M7.7 1.9H8.4Q10.4 1.9 10.4 3.9V6Q10.4 8 8.4 8H7.7"/></svg>
<span class="t" id="c21r2a" style="left:225px;top:104px;font-size:10px;color:#5c5c5c;letter-spacing:0.228px;padding-left:0.58px;">0 B</span>
<svg class="ar" style="left:256.2px;top:108.0px" viewBox="0 0 12 9" width="12" height="9" fill="none" stroke="#5f5f5f" stroke-width="1.1" stroke-linecap="round" stroke-linejoin="round"><path d="M4.4 4.9H10.4" stroke-opacity=".8" stroke-width="1.3"/><path d="M8.3 2.1L11 4.9L8.3 7.8"/><path d="M4 1.9H3.3Q1.3 1.9 1.3 3.9V6Q1.3 8 3.3 8H4"/></svg>
<span class="t" id="c21r2b" style="left:272px;top:104px;font-size:10px;color:#5c5c5c;letter-spacing:0.330px;padding-left:0.85px;">0 B</span>
</article>
</section>
</main>
</body></html>
